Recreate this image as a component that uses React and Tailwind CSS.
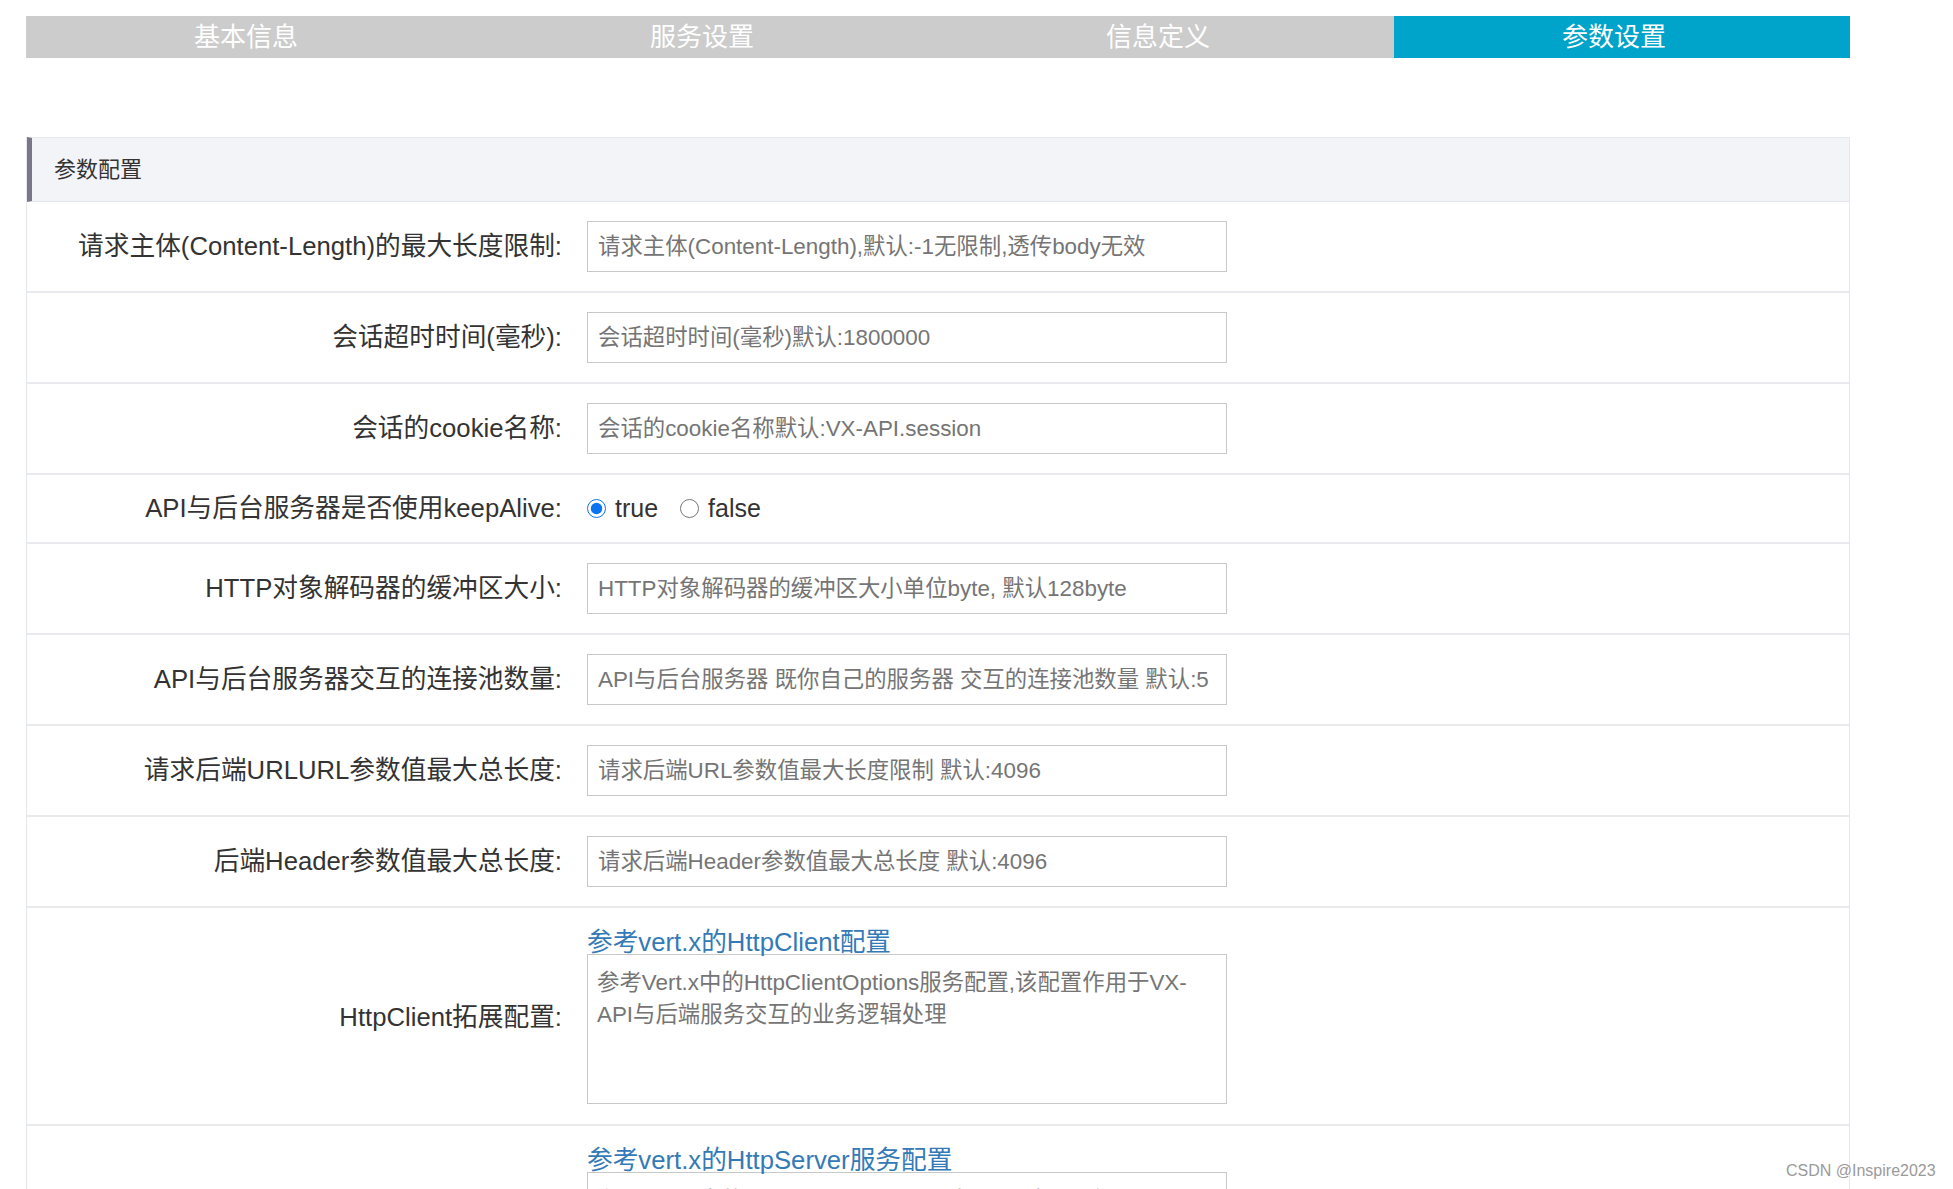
import React, { useState } from 'react';

const tabs = ['基本信息', '服务设置', '信息定义', '参数设置'];

const fields = [
  {
    label: '请求主体(Content-Length)的最大长度限制:',
    placeholder: '请求主体(Content-Length),默认:-1无限制,透传body无效',
  },
  { label: '会话超时时间(毫秒):', placeholder: '会话超时时间(毫秒)默认:1800000' },
  { label: '会话的cookie名称:', placeholder: '会话的cookie名称默认:VX-API.session' },
  { label: 'API与后台服务器是否使用keepAlive:', radio: true },
  {
    label: 'HTTP对象解码器的缓冲区大小:',
    placeholder: 'HTTP对象解码器的缓冲区大小单位byte, 默认128byte',
  },
  {
    label: 'API与后台服务器交互的连接池数量:',
    placeholder: 'API与后台服务器 既你自己的服务器 交互的连接池数量 默认:5',
  },
  {
    label: '请求后端URLURL参数值最大总长度:',
    placeholder: '请求后端URL参数值最大长度限制 默认:4096',
  },
  {
    label: '后端Header参数值最大总长度:',
    placeholder: '请求后端Header参数值最大总长度 默认:4096',
  },
];

const extras = [
  {
    label: 'HttpClient拓展配置:',
    link: '参考vert.x的HttpClient配置',
    placeholder: '参考Vert.x中的HttpClientOptions服务配置,该配置作用于VX-API与后端服务交互的业务逻辑处理',
  },
  {
    label: 'HttpServer拓展配置:',
    link: '参考vert.x的HttpServer服务配置',
    placeholder: '参考Vert.x中的HttpServerOptions服务配置,该配置作用于VX-API与客户端交互的业务逻辑处理',
  },
];

const App = () => {
  const [active, setActive] = useState(3);
  const [keepAlive, setKeepAlive] = useState('true');

  return (
    <div className="relative h-[1189px] w-[1953px] overflow-hidden bg-white font-['Liberation_Sans','Noto_Sans_CJK_SC',sans-serif] text-[#333]">
      {/* Step tabs */}
      <div className="ml-[26px] mt-[16px] flex h-[42px] w-[1824px]">
        {tabs.map((t, i) => (
          <div
            key={t}
            onClick={() => setActive(i)}
            className={
              'flex flex-1 cursor-pointer items-center justify-center pr-[16px] text-[26px] text-white ' +
              (i === active ? 'bg-[#00a3c9]' : 'bg-[#cccccc]')
            }
          >
            {t}
          </div>
        ))}
      </div>

      {/* Params section */}
      <div className="ml-[26px] mt-[79px] w-[1824px] border-x border-[#e4e7ec]">
        <div className="flex h-[65px] items-center border-y border-l-[5px] border-y-[#e4e7ec] border-l-[#7a7788] bg-[#f3f4f8] pl-[22px] text-[22px]">
          参数配置
        </div>

        {fields.map((f) => (
          <div
            key={f.label}
            className={
              'flex items-center border-b-2 border-[#e8eaee] ' +
              (f.radio ? 'py-[18px]' : 'py-[19px]')
            }
          >
            <div className="w-[535px] text-right text-[25.7px] leading-[31px]">{f.label}</div>
            <div className="pl-[25px]">
              {f.radio ? (
                <div className="flex items-center text-[25px] leading-[31px]">
                  <label className="flex items-center">
                    <input
                      type="radio"
                      name="keepAlive"
                      checked={keepAlive === 'true'}
                      onChange={() => setKeepAlive('true')}
                      className="m-0 h-[19px] w-[19px] accent-[#0b74f0]"
                    />
                    <span className="ml-[9px]">true</span>
                  </label>
                  <label className="ml-[22px] flex items-center">
                    <input
                      type="radio"
                      name="keepAlive"
                      checked={keepAlive === 'false'}
                      onChange={() => setKeepAlive('false')}
                      className="m-0 h-[19px] w-[19px] accent-[#0b74f0]"
                    />
                    <span className="ml-[9px]">false</span>
                  </label>
                </div>
              ) : (
                <input
                  type="text"
                  placeholder={f.placeholder}
                  className="h-[51px] w-[640px] border border-[#c8c8c8] px-[10px] text-[22.4px] outline-none placeholder:text-[#757575]"
                />
              )}
            </div>
          </div>
        ))}

        {extras.map((e) => (
          <div key={e.label} className="flex items-center border-b-2 border-[#e8eaee] pb-[20px] pt-[22px]">
            <div className="w-[535px] text-right text-[25.7px] leading-[31px]">{e.label}</div>
            <div className="pl-[25px]">
              <a href="#" className="block text-[25.7px] leading-[24px] text-[#337ab7]">
                {e.link}
              </a>
              <textarea
                placeholder={e.placeholder}
                className="block h-[150px] w-[640px] resize-none border border-[#c8c8c8] px-[9px] pb-[8px] pt-[12px] text-[22.4px] leading-[32px] outline-none placeholder:text-[#757575]"
              />
            </div>
          </div>
        ))}
      </div>

      {/* watermark */}
      <div className="absolute left-[1786px] top-[1162px] text-[16px] leading-[18px] text-[#9a9a9a]">
        CSDN @Inspire2023
      </div>
    </div>
  );
};

export default App;
